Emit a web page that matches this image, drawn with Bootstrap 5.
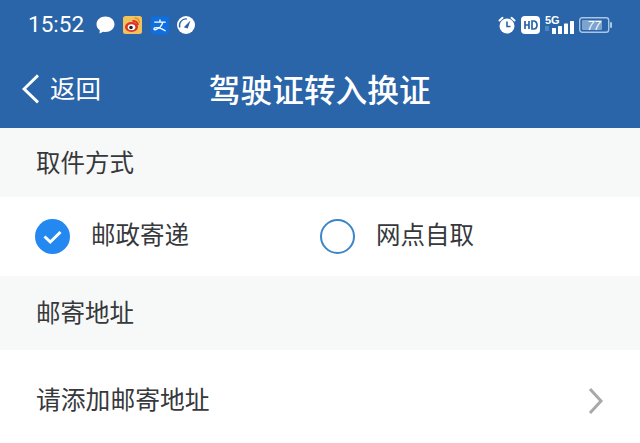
<!DOCTYPE html>
<html lang="zh-CN">
<head>
    <meta charset="UTF-8">
    <meta name="viewport" content="width=device-width, initial-scale=1.0">
    <title>驾驶证转入换证</title>
    <link href="https://cdn.jsdelivr.net/npm/bootstrap@5.3.0/dist/css/bootstrap.min.css" rel="stylesheet">
    <style>
        html, body {
            height: 443px;
            overflow: hidden;
        }

        body {
            background-color: #ffffff;
            color: #36383b;
            font-family: "Liberation Sans", "Noto Sans CJK SC", sans-serif;
            font-size: 24.5px;
        }

        .app-head {
            background-color: #2a64a9;
            color: #ffffff;
            height: 128px;
        }

        .status-row {
            height: 50px;
            padding: 0 28px;
        }

        .status-time {
            font-family: Roboto, "Liberation Sans", sans-serif;
            font-size: 22.5px;
            width: 68px;
        }

        .status-left {
            gap: 8px;
        }

        .status-right {
            gap: 5px;
        }

        .title-row {
            height: 78px;
            padding-top: 5px;
        }

        .back-link {
            left: 21px;
            top: 50%;
            transform: translateY(-50%);
            font-size: 25.5px;
            gap: 9px;
        }

        .page-title {
            font-size: 31.7px;
            font-weight: 500;
            margin-left: -0.5px;
            line-height: 1;
        }

        .band {
            background-color: #f7f8f8;
            padding-left: 36px;
        }

        .band-one {
            height: 69px;
            padding-top: 4px;
        }

        .band-two {
            height: 74px;
            padding-top: 2px;
        }

        .choice-row {
            height: 79px;
            padding-left: 35px;
        }

        .choice-item {
            width: 285px;
            gap: 21px;
        }

        .radio-empty {
            width: 35px;
            height: 35px;
            border: 2px solid #3d85c9;
            border-radius: 50%;
        }

        .add-row {
            height: 93px;
            padding: 9px 36px 0 36px;
            font-size: 24.8px;
        }
    </style>
</head>
<body>
    <div class="app-head">
        <div class="status-row d-flex align-items-center">
            <span class="status-time">15:52</span>
            <div class="status-left d-flex align-items-center">
                <!-- chat -->
                <svg width="19" height="18" viewBox="0 0 19 18"><path d="M9.5 0.5c5 0 9 3.3 9 7.8s-4 7.7-9 7.7c-0.8 0-1.6-0.1-2.3-0.2L3.5 17.6l0.3-3.3C1.700 12.900 0.500 10.800 0.500 8.300c0-4.500 4-7.800 9-7.800z" fill="#fff"/></svg>
                <!-- weibo -->
                <svg width="20" height="18" viewBox="0 0 20 18"><rect width="19" height="18" rx="2.500" fill="#f2c35a"/><ellipse cx="8.500" cy="11" rx="6.500" ry="5" fill="#d9332b"/><path d="M9.500 5a5 5 0 0 1 5.500 4" stroke="#d9332b" stroke-width="2" fill="none"/><path d="M11.500 1.800a5.500 5.500 0 0 1 5 5" stroke="#e08a2e" stroke-width="1.200" fill="none"/><ellipse cx="8.500" cy="11.300" rx="3.800" ry="3" fill="#fff"/><circle cx="8" cy="11.500" r="1.800" fill="#222"/></svg>
                <!-- alipay -->
                <svg width="18" height="19" viewBox="0 0 19 19"><rect width="19" height="19" rx="2" fill="#0f6fe0"/><path d="M4 6h11M9.500 3.500V6M12.500 6c-1 4-4.500 7-8 8-1.500 0-2-1.500-0.500-2 3-0.800 7 0.500 11 3" stroke="#fff" stroke-width="1.400" fill="none" stroke-linecap="round"/></svg>
                <!-- gauge -->
                <svg width="18" height="18" viewBox="0 0 18 18"><circle cx="9" cy="9" r="9" fill="#fff"/><path d="M2.800 11.500a6.500 6.500 0 0 1 7-8.500" stroke="#2a64a9" stroke-width="1.300" fill="none"/><path d="M6.800 11.200L13.500 4.500l-2.800 8z" fill="#2a64a9"/></svg>
            </div>
            <div class="status-right d-flex align-items-center ms-auto">
                <!-- alarm -->
                <svg width="18" height="18" viewBox="0 0 18 18"><circle cx="9" cy="10" r="7.500" fill="#fff"/><path d="M1.500 4.500L4.500 1.800M16.500 4.500L13.500 1.800" stroke="#fff" stroke-width="2" stroke-linecap="round"/><path d="M9 5.500V10.500H12.500" stroke="#2a64a9" stroke-width="1.600" fill="none"/></svg>
                <!-- HD badge -->
                <svg width="19" height="18" viewBox="0 0 19 18"><rect width="19" height="18" rx="4" fill="#fff"/><path d="M4 5v8M8 5v8M4 9h4M11 5v8h1.500c2 0 3.500-1.500 3.500-4s-1.500-4-3.500-4z" stroke="#2a64a9" stroke-width="1.700" fill="none"/></svg>
                <!-- 5G signal -->
                <svg width="29" height="20" viewBox="0 0 29 20"><text x="0" y="9" font-family="Liberation Sans" font-weight="700" font-size="11" fill="#fff">5G</text><rect x="0" y="11" width="4" height="5" fill="#4a86c5"/><rect x="7" y="13" width="4" height="6" rx="0.500" fill="#fff"/><rect x="13" y="11" width="4" height="8" rx="0.500" fill="#fff"/><rect x="19" y="8.500" width="4" height="10.500" rx="0.500" fill="#fff"/><rect x="25" y="6" width="4" height="13" rx="0.500" fill="#fff"/></svg>
                <!-- battery -->
                <svg width="33" height="16" viewBox="0 0 33 16"><rect x="0.700" y="0.700" width="29" height="14.600" rx="2.500" fill="none" stroke="#a9c6e4" stroke-width="1.400"/><rect x="3" y="3" width="20" height="10" rx="1" fill="#7da4cf"/><rect x="31" y="5" width="2" height="6" rx="1" fill="#a9c6e4"/><text x="15" y="12.500" text-anchor="middle" font-family="Liberation Sans" font-style="italic" font-size="12" fill="#fff">77</text></svg>
            </div>
        </div>
        <div class="title-row position-relative d-flex align-items-center justify-content-center">
            <a class="back-link position-absolute d-flex align-items-center text-white text-decoration-none" href="#">
                <svg width="20" height="32" viewBox="0 0 20 32"><path d="M17 2.500L3 16l14 13.500" stroke="#fff" stroke-width="2.800" fill="none"/></svg>
                <span>返回</span>
            </a>
            <div class="page-title">驾驶证转入换证</div>
        </div>
    </div>

    <div class="band band-one d-flex align-items-center">取件方式</div>

    <div class="choice-row d-flex align-items-center">
        <div class="choice-item d-flex align-items-center">
            <svg width="35" height="35" viewBox="0 0 35 35"><circle cx="17.500" cy="17.500" r="17.500" fill="#2389f0"/><path d="M9.500 17.500l5.800 5.500L25.500 13" stroke="#fff" stroke-width="3" fill="none"/></svg>
            <span>邮政寄递</span>
        </div>
        <div class="choice-item d-flex align-items-center">
            <span class="radio-empty"></span>
            <span>网点自取</span>
        </div>
    </div>

    <div class="band band-two d-flex align-items-center">邮寄地址</div>

    <div class="add-row d-flex align-items-center justify-content-between">
        <span>请添加邮寄地址</span>
        <svg width="16" height="28" viewBox="0 0 16 28"><path d="M2 2l11 12L2 26" stroke="#a8a9ab" stroke-width="3" fill="none"/></svg>
    </div>

    <script src="https://cdn.jsdelivr.net/npm/bootstrap@5.3.0/dist/js/bootstrap.bundle.min.js"></script>
</body>
</html>
